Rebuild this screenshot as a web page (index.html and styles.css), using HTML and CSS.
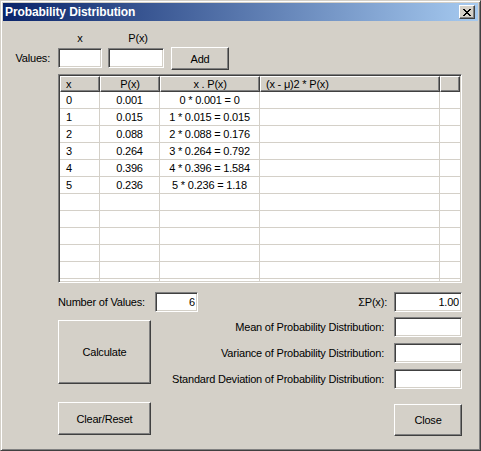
FILE: index.html
```html
<!DOCTYPE html>
<html lang="en">
<head>
<meta charset="utf-8">
<title>Probability Distribution</title>
<link rel="stylesheet" href="styles.css">
</head>
<body>
<div class="window">
  <div class="titlebar">
    <span class="title">Probability Distribution</span>
    <button class="close" aria-label="Close">
      <svg width="8" height="7" viewBox="0 0 8 7" shape-rendering="crispEdges" aria-hidden="true">
        <path fill="#000" d="M0 0h2v1h-2zM6 0h2v1h-2zM1 1h2v1h-2zM5 1h2v1h-2zM2 2h4v1h-4zM3 3h2v1h-2zM2 4h4v1h-4zM1 5h2v1h-2zM5 5h2v1h-2zM0 6h2v1h-2zM6 6h2v1h-2z"/>
      </svg>
    </button>
  </div>
  <div class="client">
    <div class="input-head">
      <span class="head-x">x</span>
      <span class="head-px">P(x)</span>
    </div>
    <div class="input-row">
      <label class="values-label">Values:</label>
      <input class="tb tb-x" type="text">
      <input class="tb tb-px" type="text">
      <button class="btn btn-add">Add</button>
    </div>
    <div class="listview">
      <table class="grid">
        <colgroup>
          <col class="c-x"><col class="c-px"><col class="c-xpx"><col class="c-var"><col class="c-fill">
        </colgroup>
        <thead>
          <tr><th class="left">x</th><th>P(x)</th><th>x . P(x)</th><th class="left">(x - μ)2 * P(x)</th><th></th></tr>
        </thead>
        <tbody>
          <tr><td class="left">0</td><td>0.001</td><td>0 * 0.001 = 0</td><td></td><td></td></tr>
          <tr><td class="left">1</td><td>0.015</td><td>1 * 0.015 = 0.015</td><td></td><td></td></tr>
          <tr><td class="left">2</td><td>0.088</td><td>2 * 0.088 = 0.176</td><td></td><td></td></tr>
          <tr><td class="left">3</td><td>0.264</td><td>3 * 0.264 = 0.792</td><td></td><td></td></tr>
          <tr><td class="left">4</td><td>0.396</td><td>4 * 0.396 = 1.584</td><td></td><td></td></tr>
          <tr><td class="left">5</td><td>0.236</td><td>5 * 0.236 = 1.18</td><td></td><td></td></tr>
          <tr><td></td><td></td><td></td><td></td><td></td></tr>
          <tr><td></td><td></td><td></td><td></td><td></td></tr>
          <tr><td></td><td></td><td></td><td></td><td></td></tr>
          <tr><td></td><td></td><td></td><td></td><td></td></tr>
          <tr><td></td><td></td><td></td><td></td><td></td></tr>
          <tr><td></td><td></td><td></td><td></td><td></td></tr>
        </tbody>
      </table>
    </div>
    <div class="summary-row">
      <label class="num-label">Number of Values:</label>
      <input class="tb tb-num" type="text" value="6">
      <label class="sum-label">ΣP(x):</label>
      <input class="tb tb-res" type="text" value="1.00">
    </div>
    <div class="stats">
      <button class="btn btn-calc">Calculate</button>
      <label class="stat-label r1">Mean of Probability Distribution:</label>
      <input class="tb tb-res r1" type="text">
      <label class="stat-label r2">Variance of Probability Distribution:</label>
      <input class="tb tb-res r2" type="text">
      <label class="stat-label r3">Standard Deviation of Probability Distribution:</label>
      <input class="tb tb-res r3" type="text">
    </div>
    <div class="footer">
      <button class="btn btn-clear">Clear/Reset</button>
      <button class="btn btn-close">Close</button>
    </div>
  </div>
</div>
</body>
</html>
```
FILE: styles.css
```css
* { box-sizing: border-box; }
html, body { margin: 0; padding: 0; background: #d4d0c8; }
body {
  font-family: "Liberation Sans", Arial, sans-serif;
  font-size: 11px;
  letter-spacing: -0.2px;
  color: #000;
}
.window {
  width: 481px;
  height: 451px;
  background: #d4d0c8;
  border: 1px solid;
  border-color: #d4d0c8 #404040 #404040 #d4d0c8;
  box-shadow: inset 1px 1px #fff, inset -1px -1px #808080;
  padding: 2px;
  display: flex;
  flex-direction: column;
}
.titlebar {
  height: 18px;
  flex: none;
  display: flex;
  align-items: center;
  padding: 0 3px 0 2px;
  background: linear-gradient(to right, #0a246a, #a6caf0);
}
.title {
  color: #fff;
  font-weight: bold;
  font-size: 12px;
  letter-spacing: -0.1px;
  flex: 1;
}
.close {
  width: 16px;
  height: 14px;
  padding: 0 0 0 0;
  background: #d4d0c8;
  border: 1px solid;
  border-color: #fff #404040 #404040 #fff;
  box-shadow: inset -1px -1px #808080;
  display: flex;
  align-items: center;
  justify-content: center;
}
.close svg { display: block; margin-left: -1px; }
.client {
  flex: 1;
  display: flex;
  flex-direction: column;
  padding: 0 16px 0 0;
}
.input-head {
  margin: 10px 0 0 55px;
  height: 14px;
  line-height: 14px;
  display: flex;
}
.head-x { width: 44px; text-align: center; }
.head-px { width: 56px; margin-left: 6px; text-align: center; padding-left: 4px; }
.input-row {
  margin-top: 2px;
  height: 23px;
  display: flex;
  align-items: flex-start;
}
.values-label {
  width: 55px;
  text-align: right;
  padding-right: 8px;
  line-height: 20px;
  margin-top: 1px;
}
.tb {
  display: block;
  height: 20px;
  margin: 0;
  padding: 0 2px;
  font: inherit;
  letter-spacing: inherit;
  color: #000;
  text-align: right;
  background: #fff;
  border: 1px solid;
  border-color: #808080 #fff #fff #808080;
  box-shadow: inset 1px 1px #404040, inset -1px -1px #d4d0c8;
  outline: none;
}
.tb-x { width: 44px; margin-top: 1px; }
.tb-px { width: 56px; margin-left: 6px; margin-top: 1px; }
.btn {
  display: block;
  margin: 0;
  padding: 0;
  font: inherit;
  letter-spacing: inherit;
  color: #000;
  background: #d4d0c8;
  border: 1px solid;
  border-color: #fff #404040 #404040 #fff;
  box-shadow: inset -1px -1px #808080;
  text-align: center;
}
.btn-add { width: 58px; height: 23px; margin-left: 7px; }
.listview {
  margin: 4px 0 0 55px;
  width: 404px;
  height: 209px;
  flex: none;
  background: #fff;
  border: 1px solid;
  border-color: #808080 #fff #fff #808080;
  box-shadow: inset 1px 1px #404040, inset -1px -1px #d4d0c8;
  padding: 1px;
  overflow: hidden;
}
.grid {
  width: 400px;
  table-layout: fixed;
  border-collapse: separate;
  border-spacing: 0;
}
.c-x { width: 40px; }
.c-px { width: 60px; }
.c-xpx { width: 100px; }
.c-var { width: 180px; }
.c-fill { width: 20px; }
.grid th {
  height: 16px;
  padding: 0 2px;
  font-weight: normal;
  line-height: 14px;
  text-align: center;
  background: #d4d0c8;
  border: 1px solid;
  border-color: #fff #404040 #404040 #fff;
  box-shadow: inset -1px -1px #808080;
  white-space: nowrap;
  overflow: hidden;
}
.grid th.left { text-align: left; padding-left: 5px; }
.grid td {
  height: 17px;
  padding: 0 2px;
  line-height: 16px;
  text-align: center;
  border-right: 1px solid #d4d0c8;
  border-bottom: 1px solid #d4d0c8;
  white-space: nowrap;
  overflow: hidden;
}
.grid td:last-child { border-right: 0; }
.grid td.left { text-align: left; padding-left: 6px; }
.summary-row {
  margin: 9px 0 0 55px;
  height: 20px;
  display: flex;
  align-items: center;
}
.num-label { width: 97px; line-height: 20px; }
.tb-num { width: 43px; }
.sum-label { margin-left: auto; margin-right: 7px; line-height: 20px; }
.tb-res { width: 68px; }
.stats {
  margin: 5px 0 0 55px;
  display: grid;
  grid-template-columns: 93px 1fr 68px;
  grid-template-rows: 26px 26px 20px;
}
.btn-calc {
  grid-column: 1;
  grid-row: 1 / 4;
  align-self: start;
  margin-top: 3px;
  height: 64px;
}
.stat-label {
  grid-column: 2;
  text-align: right;
  padding-right: 10px;
  line-height: 20px;
  white-space: nowrap;
}
.stats .tb-res { grid-column: 3; }
.r1 { grid-row: 1; }
.r2 { grid-row: 2; }
.r3 { grid-row: 3; }
.footer {
  margin: 13px 0 0 55px;
  display: flex;
  justify-content: space-between;
  align-items: flex-start;
}
.btn-clear { width: 93px; height: 33px; }
.btn-close { width: 68px; height: 32px; margin-top: 2px; }
```
